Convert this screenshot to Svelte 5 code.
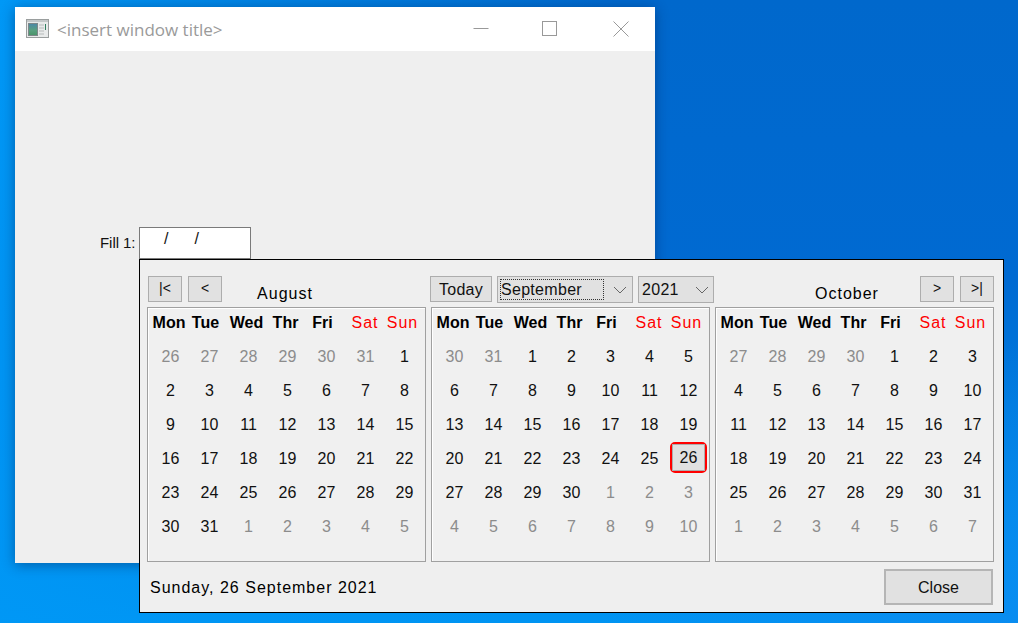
<script>
  const names = ['Mon', 'Tue', 'Wed', 'Thr', 'Fri', 'Sat', 'Sun'];
  function build(prevFrom, prevLen, len) {
    const out = [];
    for (let d = prevFrom; d <= prevLen; d++) out.push({ n: d, dim: true });
    for (let d = 1; d <= len; d++) out.push({ n: d, dim: false });
    let d = 1;
    while (out.length < 42) out.push({ n: d++, dim: true });
    return out;
  }
  const months = [
    build(26, 31, 31),
    build(30, 31, 30),
    build(27, 30, 31)
  ];
</script>

<div class="desktop">
  <section class="window">
    <header class="titlebar">
      <svg class="appicon" width="24" height="20" viewBox="0 0 24 20">
        <rect x="0.5" y="0.5" width="22" height="18" fill="#e8eaea" stroke="#9a9e9e" />
        <rect x="1" y="1" width="21" height="2" fill="#c4c8c9" />
        <defs>
          <linearGradient id="pic" x1="0" y1="0" x2="0" y2="1">
            <stop offset="0" stop-color="#4c87a8" />
            <stop offset="0.55" stop-color="#58a080" />
            <stop offset="1" stop-color="#4a9468" />
          </linearGradient>
        </defs>
        <rect x="2.5" y="4.5" width="9" height="12" fill="url(#pic)" stroke="#7d8789" />
        <rect x="13" y="5" width="5" height="2" fill="#cfd2d2" />
        <rect x="13" y="8" width="5" height="2" fill="#cfd2d2" />
        <rect x="13" y="11" width="5" height="2" fill="#cfd2d2" />
        <rect x="13" y="14" width="5" height="2" fill="#cfd2d2" />
        <rect x="19" y="5" width="1" height="6" fill="#2f7f5f" />
      </svg>
      <span class="title">&lt;insert window title&gt;</span>
      <div class="controls">
        <svg class="min" width="16" height="16" viewBox="0 0 16 16"><path d="M0.5 7.5H15.5" stroke="#999" fill="none" /></svg>
        <svg class="max" width="16" height="16" viewBox="0 0 16 16"><rect x="0.5" y="0.5" width="14" height="14" stroke="#999" fill="none" /></svg>
        <svg class="close" width="16" height="16" viewBox="0 0 16 16"><path d="M0.5 0.5L15.5 15.5M15.5 0.5L0.5 15.5" stroke="#999" fill="none" /></svg>
      </div>
    </header>
    <div class="client">
      <div class="field">
        <span class="fieldlabel">Fill 1:</span>
        <div class="input"><span>/</span><span>/</span></div>
      </div>
    </div>
  </section>

  <section class="popup">
    <div class="nav">
      <div class="nav-left">
        <button class="btn">|&lt;</button>
        <button class="btn">&lt;</button>
        <span class="month m-left">August</span>
      </div>
      <div class="nav-mid">
        <button class="btn today">Today</button>
        <div class="combo sep">
          <span class="focus">September</span>
          <svg width="14" height="8" viewBox="0 0 14 8"><path d="M1 1L7 7L13 1" stroke="#666" fill="none" /></svg>
        </div>
        <div class="combo year">
          <span class="plain">2021</span>
          <svg width="14" height="8" viewBox="0 0 14 8"><path d="M1 1L7 7L13 1" stroke="#666" fill="none" /></svg>
        </div>
      </div>
      <div class="nav-right">
        <span class="month m-right">October</span>
        <button class="btn">&gt;</button>
        <button class="btn">&gt;|</button>
      </div>
    </div>

    <div class="panels">
      {#each months as days, m}
        <div class="panel">
          <div class="heads">
            {#each names as name, i}
              <span class:red={i > 4}>{name}</span>
            {/each}
          </div>
          <div class="days">
            {#each days as day}
              <span class="day" class:dim={day.dim}>
                {#if m === 1 && !day.dim && day.n === 26}
                  <span class="selected"><span>{day.n}</span></span>
                {:else}
                  {day.n}
                {/if}
              </span>
            {/each}
          </div>
        </div>
      {/each}
    </div>

    <div class="footer">
      <span class="status">Sunday, 26 September 2021</span>
      <button class="closebtn">Close</button>
    </div>
  </section>
</div>

<style>
  :global(body) {
    margin: 0;
  }
  .desktop {
    position: relative;
    width: 1018px;
    height: 623px;
    overflow: hidden;
    font-family: "Liberation Sans", Arial, sans-serif;
    background:
      radial-gradient(ellipse 420px 300px at 1018px 640px, #0a8cf0 0%, rgba(10, 140, 240, 0) 100%),
      linear-gradient(100deg, #0098f6 0%, rgba(0, 152, 246, 0) 55%),
      linear-gradient(180deg, #0068cc 0%, #006ad2 45%, #0094f2 100%);
  }
  .window {
    position: absolute;
    left: 15px;
    top: 7px;
    width: 640px;
    height: 556px;
    background: #efefef;
    box-shadow: 0 2px 12px rgba(0, 30, 80, 0.45);
    display: flex;
    flex-direction: column;
  }
  .titlebar {
    height: 44px;
    background: #fff;
    display: flex;
    align-items: center;
    padding-left: 11px;
    box-sizing: border-box;
    position: relative;
  }
  .appicon {
    display: block;
    margin-top: -1px;
  }
  .title {
    margin-left: 7px;
    font-family: "Open Sans", sans-serif;
    font-size: 17px;
    color: #9a9a9a;
  }
  .controls svg {
    position: absolute;
    top: 14px;
    display: block;
  }
  .controls .min { left: 458px; }
  .controls .max { left: 527px; }
  .controls .close { left: 598px; }
  .client {
    flex: 1;
    position: relative;
  }
  .field {
    display: flex;
    align-items: center;
    margin-top: 176px;
    padding-left: 85px;
  }
  .fieldlabel {
    width: 36px;
    font-size: 15px;
    color: #111;
    white-space: nowrap;
    margin: -2px 3px 0 0;
    letter-spacing: -0.05px;
  }
  .input {
    width: 112px;
    height: 32px;
    box-sizing: border-box;
    background: #fff;
    border: 1px solid #7a7a7a;
    font-size: 16px;
    color: #111;
    display: flex;
    gap: 26px;
    padding: 2px 0 0 24px;
  }
  .popup {
    position: absolute;
    left: 139px;
    top: 259px;
    width: 865px;
    height: 354px;
    box-sizing: border-box;
    border: 1px solid #000;
    background: #efefef;
    padding: 16px 0 0 7px;
    color: #000;
    font-size: 16px;
  }
  .nav {
    display: flex;
    height: 31px;
  }
  .nav-left {
    width: 283px;
    box-sizing: border-box;
    padding-left: 1px;
    display: flex;
    gap: 6px;
  }
  .nav-mid {
    width: 284px;
    display: flex;
    gap: 5px;
  }
  .nav-right {
    width: 280px;
    display: flex;
    gap: 6px;
    padding-left: 62px;
    box-sizing: border-box;
  }
  .btn {
    width: 34px;
    height: 26px;
    box-sizing: border-box;
    border: 1px solid #adadad;
    background: #e1e1e1;
    font-family: inherit;
    font-size: 14px;
    color: #111;
    padding: 0 0 2px;
  }
  .today {
    width: 62px;
    font-size: 16px;
    letter-spacing: 0.3px;
    padding: 2px 0 0;
  }
  .month {
    display: block;
    text-align: center;
    letter-spacing: 1px;
    padding-top: 8px;
    line-height: 19px;
  }
  .m-left {
    width: 126px;
    margin-left: -6px;
  }
  .m-right {
    width: 142px;
    margin-right: -4px;
  }
  .combo {
    height: 27px;
    box-sizing: border-box;
    border: 1px solid #adadad;
    background: #e1e1e1;
    display: flex;
    align-items: center;
    justify-content: space-between;
    padding-right: 5px;
    color: #111;
    letter-spacing: 0.3px;
  }
  .sep { width: 136px; padding-left: 2px; }
  .year { width: 76px; padding-left: 3px; padding-right: 4px; }
  .focus {
    width: 104px;
    height: 21px;
    box-sizing: border-box;
    outline: 1px dotted #333;
    outline-offset: -1px;
    line-height: 22px;
    padding-left: 1px;
  }
  .plain { line-height: 20px; }
  .panels {
    display: flex;
    gap: 5px;
  }
  .panel {
    width: 279px;
    height: 255px;
    box-sizing: border-box;
    border: 1px solid #a0a0a0;
    box-shadow: inset 1px 1px 0 #fff;
    background: #f0f0f0;
    padding: 5px 0 0 3px;
  }
  .heads {
    display: grid;
    grid-template-columns: 36px 37px 45px 33px 41px 44px 31px;
    font-weight: bold;
    line-height: 19px;
    white-space: nowrap;
    justify-content: start;
    margin-bottom: 8px;
  }
  .heads span {
    display: flex;
    justify-content: center;
  }
  .heads .red {
    color: #f00;
    font-weight: normal;
    letter-spacing: 1px;
  }
  .days {
    display: grid;
    grid-template-columns: repeat(7, 39px);
    grid-auto-rows: 34px;
    font-size: 16px;
    color: #111;
  }
  .day {
    display: flex;
    align-items: center;
    justify-content: center;
  }
  .dim { color: #8c8c8c; }
  .selected {
    display: flex;
    width: 37px;
    height: 31px;
    margin-top: -3px;
    box-sizing: border-box;
    border: 2px solid #f00;
    border-radius: 5px;
  }
  .selected span {
    flex: 1;
    display: flex;
    align-items: center;
    justify-content: center;
    background: #e1e1e1;
    border: 1px solid #adadad;
  }
  .footer {
    display: flex;
    justify-content: space-between;
    align-items: center;
    margin-top: 7px;
    padding-left: 3px;
    padding-right: 10px;
    height: 36px;
  }
  .status {
    letter-spacing: 1px;
    padding-top: 2px;
  }
  .closebtn {
    width: 109px;
    height: 36px;
    box-sizing: border-box;
    border: 2px solid #b5b5b5;
    background: #e1e1e1;
    font-family: inherit;
    font-size: 16px;
    color: #111;
    padding: 2px 0 0;
  }
</style>
